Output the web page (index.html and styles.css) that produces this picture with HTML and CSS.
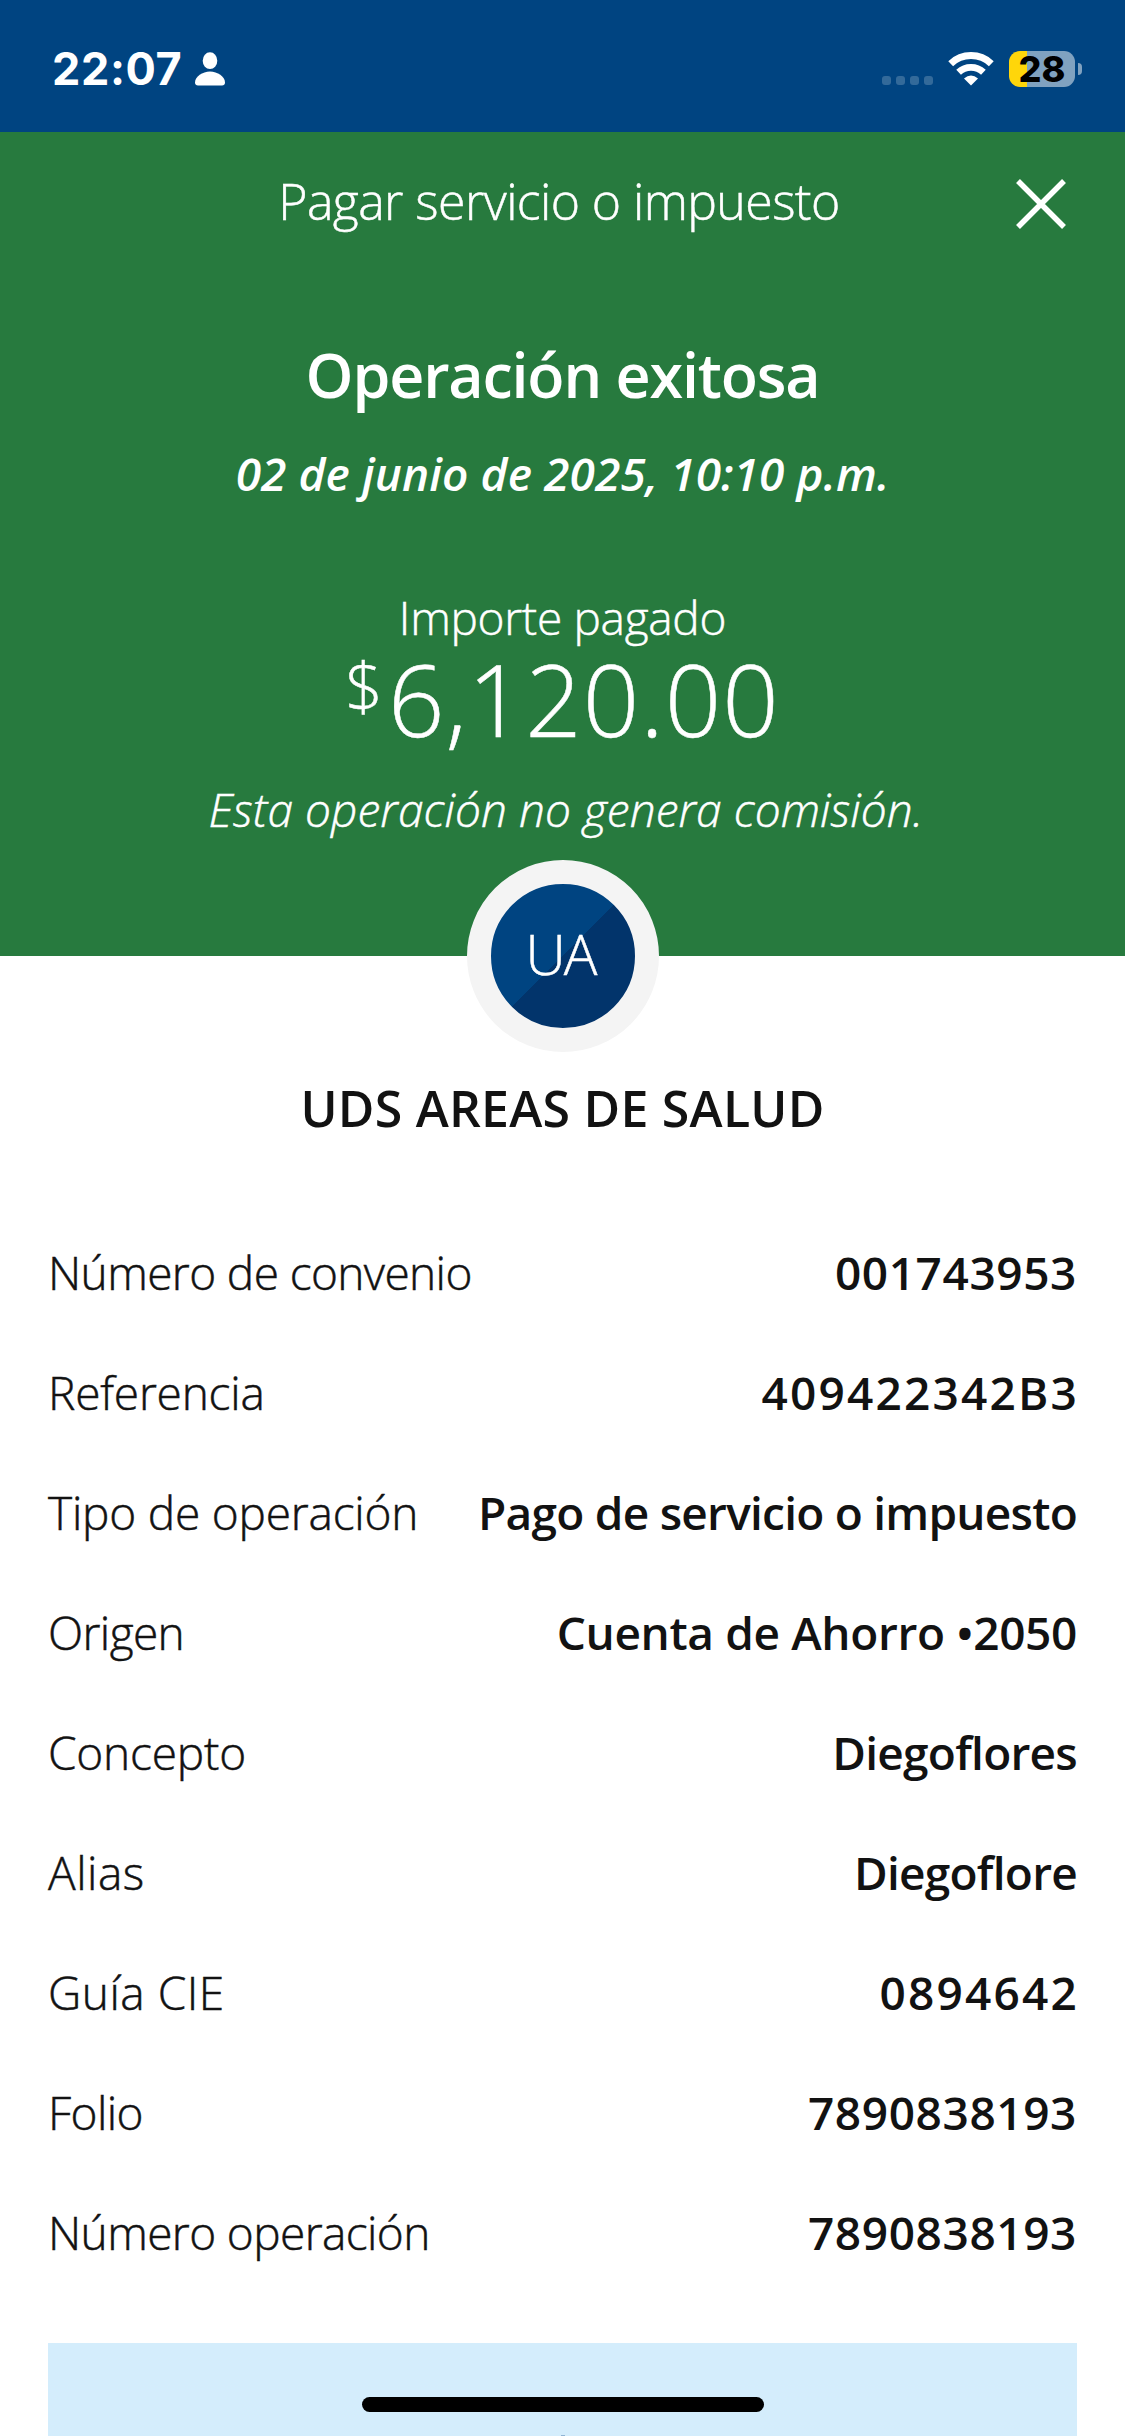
FILE: index.html
```
<!DOCTYPE html>
<html lang="es">
<head>
    <meta charset="UTF-8">
    <meta name="viewport" content="width=device-width, initial-scale=1.0">
    <title>Pagar servicio o impuesto</title>

    <link rel="stylesheet" href="styles.css">
</head>
<body>
    <div class="status-bar">
        <div class="status-left">
            <span class="time">22:07</span>
            <svg class="person" width="30" height="34" viewBox="0 0 30 34">
                <ellipse cx="15" cy="8.7" rx="7.3" ry="8.4" fill="#fff"/>
                <path d="M15 19.5C22.5 19.5 30 24.500 30 30.500C30 32.500 28.800 33.500 27 33.500H3C1.200 33.500 0 32.500 0 30.500C0 24.500 7.500 19.500 15 19.500Z" fill="#fff"/>
            </svg>
        </div>
        <div class="status-right">
            <div class="signal"><i></i><i></i><i></i><i></i></div>
            <svg class="wifi" width="46" height="34" viewBox="0 0 46 34">
                <path d="M2.700 11.700A29.500 29.500 0 0 1 43.300 11.700" fill="none" stroke="#fff" stroke-width="7"/>
                <path d="M10.600 20.300A18 18 0 0 1 35.400 20.300" fill="none" stroke="#fff" stroke-width="6.800"/>
                <path d="M23 33.500L16 26.600Q23 20.600 30 26.600Z" fill="#fff"/>
            </svg>
            <div class="battery">28</div>
            <div class="battery-tip"></div>
        </div>
    </div>

    <div class="hero">
        <div class="header">
            <span class="header-title">Pagar servicio o impuesto</span>
            <svg class="close" width="50" height="50" viewBox="0 0 50 50">
                <path d="M2 2L48 48M48 2L2 48" stroke="#fff" stroke-width="5.500"/>
            </svg>
        </div>
        <h1>Operación exitosa</h1>
        <p class="date">02 de junio de 2025, 10:10 p.m.</p>
        <p class="amount-label">Importe pagado</p>
        <div class="amount"><span class="currency">$</span><span class="number">6,120.00</span></div>
        <p class="commission">Esta operación no genera comisión.</p>
    </div>

    <div class="avatar">UA</div>
    <h2>UDS AREAS DE SALUD</h2>

    <div class="details">
        <div class="row"><span class="label tight">Número de convenio</span><span class="value digits">001743953</span></div>
        <div class="row"><span class="label">Referencia</span><span class="value digits wide">409422342B3</span></div>
        <div class="row"><span class="label">Tipo de operación</span><span class="value tight">Pago de servicio o impuesto</span></div>
        <div class="row"><span class="label tight">Origen</span><span class="value">Cuenta de Ahorro •2050</span></div>
        <div class="row"><span class="label">Concepto</span><span class="value tight">Diegoflores</span></div>
        <div class="row"><span class="label loose">Alias</span><span class="value tight">Diegoflore</span></div>
        <div class="row"><span class="label loose">Guía CIE</span><span class="value digits wide">0894642</span></div>
        <div class="row"><span class="label tight">Folio</span><span class="value digits">7890838193</span></div>
        <div class="row"><span class="label tight">Número operación</span><span class="value digits">7890838193</span></div>
    </div>

    <div class="notice">
        <div class="home-indicator"></div>
        <div class="notice-icon"></div>
    </div>
</body>
</html>
```
FILE: styles.css
```
* {
    box-sizing: border-box;
}

body {
    margin: 0;
    width: 1125px;
    height: 2436px;
    overflow: hidden;
    display: flex;
    flex-direction: column;
    background: #fff;
    color: #121212;
    font-family: "Open Sans", sans-serif;
    font-size: 46px;
    font-weight: 300;
}

h1, h2, p {
    margin: 0;
}

.status-bar {
    height: 132px;
    flex: none;
    padding: 6px 43px 0 52px;
    display: flex;
    justify-content: space-between;
    align-items: center;
    background: #004481;
    color: #fff;
}

.status-left, .status-right {
    display: flex;
    align-items: center;
}

.time {
    width: 143px;
    font-family: Inter, sans-serif;
    font-size: 45px;
    font-weight: 700;
    line-height: 60px;
    letter-spacing: 0.6px;
}

.signal {
    display: flex;
    gap: 5px;
    margin: 23px 15px 0 0;
}

.signal i {
    width: 9px;
    height: 9px;
    border-radius: 3px;
    background: #336a9a;
}

.battery {
    width: 66px;
    height: 36px;
    margin: 0 3px 0 15px;
    border-radius: 11px;
    background: linear-gradient(to right, #ffd60a 18px, #80a2c0 18px);
    color: #000;
    font-family: Inter, sans-serif;
    font-size: 36px;
    font-weight: 800;
    line-height: 36px;
    text-align: center;
}

.battery-tip {
    width: 4px;
    height: 12px;
    border-radius: 0 4px 4px 0;
    background: #80a2c0;
}

.hero {
    height: 824px;
    flex: none;
    background: #277a3e;
    color: #fff;
    text-align: center;
}

.header {
    height: 135px;
    padding: 0 59px 0 54px;
    display: flex;
    align-items: center;
}

.header-title {
    flex: 1;
    padding: 2px 0 0 48px;
    font-size: 50px;
    letter-spacing: -0.6px;
}

.close {
    margin-top: 9px;
}

h1 {
    margin-top: 68px;
    font-size: 61px;
    font-weight: 600;
    line-height: 80px;
    letter-spacing: -1.2px;
}

.date {
    margin-top: 28px;
    font-style: italic;
    font-weight: 600;
    line-height: 60px;
    letter-spacing: 0.1px;
}

.amount-label {
    margin-top: 84px;
    line-height: 60px;
    letter-spacing: -0.3px;
}

.amount {
    display: flex;
    justify-content: center;
    margin-top: 2px;
}

.currency {
    margin-right: 5px;
    font-size: 66px;
    line-height: 72px;
}

.number {
    font-size: 99px;
    line-height: 100px;
    letter-spacing: 1px;
}

.commission {
    margin-top: 30px;
    padding-left: 7px;
    font-style: italic;
    line-height: 60px;
    letter-spacing: 0.1px;
}

/* light weight is too thin at this size */
.header-title, .amount-label, .amount, .commission, .avatar, .label {
    -webkit-text-stroke: 0.5px currentColor;
}

/* overlaps the bottom edge of the green header */
.avatar {
    width: 192px;
    height: 192px;
    flex: none;
    margin: -96px auto 0;
    padding-right: 4px;
    border: 24px solid #f4f4f4;
    border-radius: 50%;
    background: linear-gradient(135deg, #004481 50%, #02346b 50%);
    background-origin: border-box;
    color: #fff;
    font-size: 56px;
    line-height: 138px;
    letter-spacing: -2px;
    text-align: center;
}

h2 {
    margin-top: 21px;
    font-size: 50px;
    font-weight: 600;
    line-height: 70px;
    letter-spacing: 0.25px;
    text-align: center;
}

.details {
    margin-top: 69px;
    padding: 0 48px;
}

.row {
    height: 120px;
    display: flex;
    justify-content: space-between;
    line-height: 120px;
    white-space: nowrap;
}

.label {
    letter-spacing: -0.2px;
}

.label.tight {
    letter-spacing: -0.6px;
}

.label.loose {
    letter-spacing: 0.5px;
}

.value {
    font-weight: 600;
    letter-spacing: -0.35px;
}

.value.tight {
    letter-spacing: -0.75px;
}

.value.digits {
    letter-spacing: 0.6px;
}

.value.digits.wide {
    margin-right: -2px;
    letter-spacing: 2.2px;
}

.notice {
    flex: 1;
    margin: 51px 48px 0;
    padding-top: 54px;
    display: flex;
    flex-direction: column;
    justify-content: space-between;
    align-items: center;
    background: #d4edfc;
}

.home-indicator {
    width: 402px;
    height: 15px;
    border-radius: 8px;
    background: #000;
}

/* top edge of the icon, the rest is below the fold */
.notice-icon {
    width: 4px;
    height: 1px;
    background: #8fb4d4;
}
```
